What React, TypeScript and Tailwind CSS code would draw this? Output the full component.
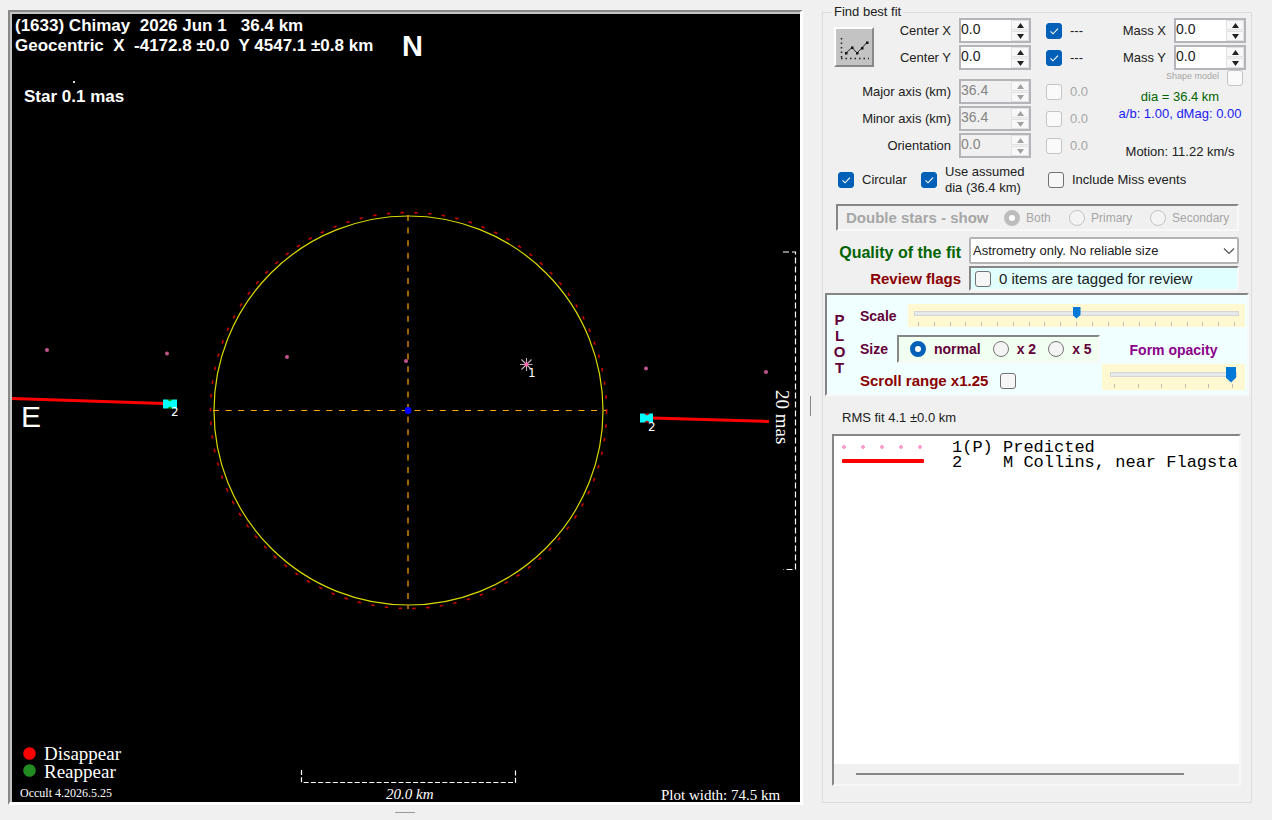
import { useState } from "react";

const sunken = "border-t-2 border-l-2 border-r-2 border-b-2 border-t-[#868686] border-l-[#868686] border-r-[#f8f8f8] border-b-[#f8f8f8]";

interface CheckProps {
  id: string;
  label?: string;
  defaultChecked?: boolean;
  disabled?: boolean;
}

function Check({ id, label, defaultChecked, disabled }: CheckProps) {
  return (
    <span className="grid size-4 shrink-0">
      <input
        id={id}
        type="checkbox"
        aria-label={label}
        defaultChecked={defaultChecked}
        disabled={disabled}
        className="peer [grid-area:1/1] size-4 appearance-none rounded-[3px] border border-[#727272] bg-[#f6f6f6] checked:border-[#0060b8] checked:bg-[#0060b8] disabled:border-[#c4c4c4] disabled:bg-[#fafafa]"
      />
      <svg viewBox="0 0 16 16" className="pointer-events-none invisible size-4 [grid-area:1/1] peer-checked:visible">
        <path d="M4.5 8.3 7 10.8l5-5.1" fill="none" stroke="#fff" strokeWidth="1.1" />
      </svg>
    </span>
  );
}

interface SpinnerProps {
  id: string;
  value: string;
  disabled?: boolean;
}

function Spinner({ id, value, disabled }: SpinnerProps) {
  const color = disabled ? "#a0a0a0" : "#202020";
  return (
    <span className={"flex h-[25px] w-[72px] shrink-0 border-2 border-[#b4b4ba] " + (disabled ? "bg-[#f0f0f0]" : "bg-white")}>
      <input
        id={id}
        defaultValue={value}
        disabled={disabled}
        className="w-12 min-w-0 flex-1 bg-transparent pb-1 text-[14px] leading-4 text-[#202020] outline-none disabled:text-[#848484]"
      />
      <span className="flex w-[18px] flex-col gap-px bg-[#f0f0f0]">
        <button type="button" aria-label="Up" disabled={disabled} className="flex flex-1 items-center justify-center border border-[#e2e2e2] bg-[#f8f8f8]">
          <svg width="7" height="5" viewBox="0 0 7 5"><path d="M0 5 3.5 0 7 5z" fill={color} /></svg>
        </button>
        <button type="button" aria-label="Down" disabled={disabled} className="flex flex-1 items-center justify-center border border-[#e2e2e2] bg-[#f8f8f8]">
          <svg width="7" height="5" viewBox="0 0 7 5"><path d="M0 0 3.5 5 7 0z" fill={color} /></svg>
        </button>
      </span>
    </span>
  );
}

interface FitRowProps {
  id: string;
  label: string;
  value: string;
  error: string;
  locked?: boolean;
}

function FitRow({ id, label, value, error, locked }: FitRowProps) {
  return (
    <div className="flex items-center">
      <label htmlFor={id} className="flex-1 pr-2 text-right whitespace-nowrap">{label}</label>
      <Spinner id={id} value={value} disabled={locked} />
      <span className="ml-[15px] flex items-center gap-2">
        <Check id={id + "-fit"} label={"Fit " + label} defaultChecked={!locked} disabled={locked} />
        <span className={"w-7 " + (locked ? "text-[#a6a6a6]" : "")}>{error}</span>
      </span>
    </div>
  );
}

const radioClass =
  "size-4 shrink-0 appearance-none rounded-full border border-[#767676] bg-[#f4f4f4] checked:border-[5px] checked:border-[#0060b8] checked:bg-white disabled:border-[#c4c4c4] disabled:checked:border-[#bdbdbd]";

const rangeClass =
  "block w-full appearance-none bg-transparent outline-none [&::-webkit-slider-runnable-track]:h-[5px] [&::-webkit-slider-runnable-track]:border [&::-webkit-slider-runnable-track]:border-[#d6d6d6] [&::-webkit-slider-runnable-track]:bg-[#e7eaea] [&::-webkit-slider-thumb]:appearance-none [&::-webkit-slider-thumb]:bg-[#0078d7] [&::-webkit-slider-thumb]:[clip-path:polygon(0_0,100%_0,100%_70%,50%_100%,0_70%)]";

function Ticks({ count }: { count: number }) {
  return (
    <div className="flex justify-between px-1">
      {Array.from({ length: count }, (_, i) => (
        <span key={i} className="h-1 w-px bg-[#bdbdb0]" />
      ))}
    </div>
  );
}

const predicted = [[47, 350], [167, 353.5], [287, 357], [406, 361], [646, 368.5], [766, 372]];

function Plot() {
  return (
    <svg viewBox="12 14 788 788" className="block h-auto w-full bg-black">
      <g fill="#fff" fontFamily="'Liberation Sans', sans-serif" fontWeight="700" fontSize="17">
        <text x="15" y="31" className="whitespace-pre">{"(1633) Chimay  2026 Jun 1   36.4 km"}</text>
        <text x="15" y="51" className="whitespace-pre">{"Geocentric  X  -4172.8 ±0.0  Y 4547.1 ±0.8 km"}</text>
        <text x="24" y="102">Star 0.1 mas</text>
        <text x="402" y="56" fontSize="29">N</text>
        <text x="21" y="427" fontSize="30" fontWeight="400">E</text>
      </g>
      <rect x="73" y="81" width="2" height="2" fill="#ddd" />

      {/* fitted circle and its axes */}
      <circle cx="408.5" cy="410.5" r="198" fill="none" stroke="#c80000" strokeWidth="1.6" strokeDasharray="3.5 10.3" />
      <circle cx="408.5" cy="410.5" r="194.5" fill="none" stroke="#d8d800" strokeWidth="1.2" />
      <path d="M408 215V609M213 410.5H606" fill="none" stroke="#ffa500" strokeWidth="1.2" strokeDasharray="6 6.6" />
      <circle cx="408" cy="410.5" r="3.4" fill="#00f" />

      {predicted.map(([x, y]) => (
        <circle key={x} cx={x} cy={y} r="2" fill="#c0548c" />
      ))}
      <path d="M520 364.5H532.500M526.500 358V371M521.500 359.500 531.500 369.500M531.500 359.500 521.500 369.500" stroke="#c8b0c4" strokeWidth="1.1" />
      <circle cx="526.5" cy="364.5" r="2" fill="#ff69b4" />

      {/* observed chord */}
      <path d="M10 398.500 164 403.500M652 418 769 421.500" stroke="#f00" strokeWidth="3" />
      <path d="M163 399.500H167.500L170 401 172.500 399.500H177V408.500H172.500L170 407 167.500 408.500H163z" fill="#0ff" />
      <path d="M167 399.500H173L170 401.500zM167 408.500H173L170 406.500z" fill="#00a000" />
      <path d="M640 413.500H644.500L647 415 649.500 413.500H653V422.500H649.500L647 421 644.500 422.500H640z" fill="#0ff" />
      <path d="M644 413.500H650L647 415.500zM644 422.500H650L647 420.500z" fill="#c00" />
      <g fill="#fff" fontFamily="'DejaVu Sans', sans-serif" fontSize="12">
        <text x="171" y="416">2</text>
        <text x="648" y="431">2</text>
        <text x="528" y="377">1</text>
      </g>

      {/* scale brackets */}
      <path d="M301.500 770V782.500H515.500V770" fill="none" stroke="#fff" strokeWidth="1.2" strokeDasharray="5 2.3" />
      <path d="M783 252H795.500V569.500H783" fill="none" stroke="#fff" strokeWidth="1.2" strokeDasharray="6 3" />

      <circle cx="29.5" cy="753.5" r="6.300" fill="#f00" />
      <circle cx="29.5" cy="770.5" r="6.300" fill="#228b22" />
      <g fill="#fff" fontFamily="'Liberation Serif', serif">
        <text x="44" y="760" fontSize="19">Disappear</text>
        <text x="44" y="778" fontSize="19">Reappear</text>
        <text x="20" y="797" fontSize="12">Occult 4.2026.5.25</text>
        <text x="386" y="799" fontSize="15" fontStyle="italic">20.0 km</text>
        <text x="661" y="800" fontSize="15">Plot width: 74.5 km</text>
        <text transform="translate(776 390) rotate(90)" fontSize="19">20 mas</text>
      </g>
    </svg>
  );
}

export default function App() {
  const [scale, setScale] = useState(10);
  const [opacity, setOpacity] = useState(5);
  const [size, setSize] = useState("normal");

  return (
    <div className="min-h-screen bg-[#f0f0f0] font-['Liberation_Sans',sans-serif] text-[13px] leading-4 text-[#202020]">
      <div className="flex pt-[6px] pr-5 pl-2">
        <main className="mt-1 min-w-0 flex-1 border-t-2 border-r-[3px] border-b-[3px] border-l-2 border-t-[#888] border-r-white border-b-white border-l-[#888]">
          <div className="border-t-2 border-l-2 border-[#c4c4c4]">
            <Plot />
          </div>
        </main>

        <div className="flex w-[19px] shrink-0 items-center pl-[7px]">
          <span className="h-5 w-px bg-[#868686]" />
        </div>

        <fieldset className="mb-[2px] flex w-[430px] shrink-0 flex-col border border-[#dcdcdc]">
          <legend className="ml-[9px] px-[2px] leading-3">Find best fit</legend>

          <div className="flex pr-[5px] pl-[11px]">
            <div className="flex w-[264px] flex-col gap-[9px]">
              <div className="flex">
                <button type="button" aria-label="Plot" className="mt-[9px] size-10 shrink-0 border-2 border-t-white border-r-[#888] border-b-[#888] border-l-white bg-[#c3c3c3]">
                  <svg viewBox="0 0 36 36" className="size-9">
                    <path d="M5.500 9V30M5 29.500H33" stroke="#222" strokeWidth="1.500" strokeDasharray="1.500 3" />
                    <path d="M10 24 16 18.500 21 24 31 13.500" fill="none" stroke="#222" strokeWidth="1" />
                    <path d="M9 23h2.500v2.500H9zM15 17.500h2.500V20H15zM20 23h2.500v2.500H20zM25 18h2.500v2.500H25zM30 12.500h2.500V15H30z" fill="#111" />
                  </svg>
                </button>
                <div className="flex flex-1 flex-col gap-[2px]">
                  <FitRow id="center-x" label="Center X" value="0.0" error="---" />
                  <FitRow id="center-y" label="Center Y" value="0.0" error="---" />
                </div>
              </div>
              <div className="flex flex-col gap-[2px]">
                <FitRow id="major" label="Major axis (km)" value="36.4" error="0.0" locked />
                <FitRow id="minor" label="Minor axis (km)" value="36.4" error="0.0" locked />
                <FitRow id="orientation" label="Orientation" value="0.0" error="0.0" locked />
              </div>
            </div>

            <div className="flex flex-1 flex-col">
              <div className="flex flex-col gap-[2px]">
                <div className="flex items-center">
                  <label htmlFor="mass-x" className="flex-1 pr-2 text-right">Mass X</label>
                  <Spinner id="mass-x" value="0.0" />
                </div>
                <div className="flex items-center">
                  <label htmlFor="mass-y" className="flex-1 pr-2 text-right">Mass Y</label>
                  <Spinner id="mass-y" value="0.0" />
                </div>
              </div>
              <div className="flex justify-end gap-2 pr-[3px]">
                <label htmlFor="shape" className="text-[9px] leading-3 text-[#a6a6a6]">Shape model</label>
                <Check id="shape" disabled />
              </div>
              <div className="-mb-[2px] flex flex-1 flex-col pt-[3px] pl-4 text-center whitespace-nowrap">
                <p className="text-[#006400]">dia = 36.4 km</p>
                <p className="mt-px text-[#1c1cf0]">a/b: 1.00, dMag: 0.00</p>
                <p className="mt-auto">Motion: 11.22 km/s</p>
              </div>
            </div>
          </div>

          <div className="mt-[6px] grid grid-cols-[83px_127px_1fr] items-center pl-[15px]">
            <div className="flex items-center gap-2">
              <Check id="circular" defaultChecked />
              <label htmlFor="circular">Circular</label>
            </div>
            <div className="flex items-center gap-2">
              <Check id="assumed" defaultChecked />
              <label htmlFor="assumed">Use assumed<br />dia (36.4 km)</label>
            </div>
            <div className="flex items-center gap-2">
              <Check id="miss" />
              <label htmlFor="miss">Include Miss events</label>
            </div>
          </div>

          <div className={"mt-2 mr-3 ml-[13px] flex h-[27px] items-center pl-2 text-[12px] text-[#a6a6a6] " + sunken}>
            <span className="w-[158px] text-[15px] font-bold">Double stars - show</span>
            <label className="flex w-[65px] items-center gap-[6px]">
              <input type="radio" name="double" defaultChecked disabled className={radioClass} />Both
            </label>
            <label className="flex w-[81px] items-center gap-[6px]">
              <input type="radio" name="double" disabled className={radioClass} />Primary
            </label>
            <label className="flex items-center gap-[6px]">
              <input type="radio" name="double" disabled className={radioClass} />Secondary
            </label>
          </div>

          <div className="mt-[6px] mr-3 flex items-center justify-end gap-2">
            <label htmlFor="quality" className="pt-1 text-[16px] font-bold text-[#006400]">Quality of the fit</label>
            <div className="grid w-[270px]">
              <select id="quality" className="h-[27px] appearance-none rounded-[2px] border-2 border-[#b4b4b4] bg-white px-[2px] [grid-area:1/1]">
                <option>Astrometry only. No reliable size</option>
              </select>
              <svg viewBox="0 0 12 12" className="pointer-events-none mr-1 size-3 self-center justify-self-end [grid-area:1/1]">
                <path d="M1 3.500 6 8.500 11 3.500" fill="none" stroke="#555" strokeWidth="1.200" />
              </svg>
            </div>
          </div>

          <div className="mt-[2px] mr-3 flex items-center justify-end gap-2">
            <span className="text-[15px] font-bold text-[#8b0000]">Review flags</span>
            <div className={"flex h-[25px] w-[270px] items-center gap-2 bg-[#e0ffff] pl-1 text-[15px] " + sunken}>
              <Check id="review" />
              <label htmlFor="review">0 items are tagged for review</label>
            </div>
          </div>

          <div className={"mt-[2px] mr-[2px] ml-[2px] flex bg-[#f0ffff] pt-[9px] pb-1 text-[14px] font-bold text-[#640038] " + sunken}>
            <div className="flex w-[33px] flex-col items-center pt-2 pr-2 text-[15px]">
              <span>P</span>
              <span>L</span>
              <span>O</span>
              <span>T</span>
            </div>
            <div className="flex-1">
              <div className="flex items-center pr-[2px]">
                <label htmlFor="scale" className="w-12">Scale</label>
                <div className="flex-1 bg-[#fff8d0] px-[6px] pb-px">
                  <input
                    id="scale"
                    type="range"
                    min="0"
                    max="20"
                    value={scale}
                    onChange={(e) => setScale(Number(e.target.value))}
                    className={rangeClass + " h-[18px] [&::-webkit-slider-thumb]:-mt-[5px] [&::-webkit-slider-thumb]:h-3 [&::-webkit-slider-thumb]:w-2"}
                  />
                  <Ticks count={21} />
                </div>
              </div>
              <div className="mt-2 flex justify-between pr-[2px]">
                <div>
                  <div className="flex items-center">
                    <span className="w-[37px]">Size</span>
                    <div className={"flex h-7 w-[203px] items-center gap-3 bg-[#f0fff0] pl-[11px] " + sunken}>
                      {["normal", "x 2", "x 5"].map((s) => (
                        <label key={s} className="flex items-center gap-2">
                          <input type="radio" name="size" checked={size === s} onChange={() => setSize(s)} className={radioClass} />
                          {s}
                        </label>
                      ))}
                    </div>
                  </div>
                  <div className="mt-[10px] flex items-center gap-3 text-[15px] text-[#8b0000]">
                    <label htmlFor="scroll">Scroll range x1.25</label>
                    <Check id="scroll" />
                  </div>
                </div>
                <div className="w-[143px]">
                  <label htmlFor="opacity" className="block pt-[7px] pb-[6px] text-center text-[#8b008b]">Form opacity</label>
                  <div className="bg-[#fff8d0] px-2 pb-[2px]">
                    <input
                      id="opacity"
                      type="range"
                      min="0"
                      max="5"
                      value={opacity}
                      onChange={(e) => setOpacity(Number(e.target.value))}
                      className={rangeClass + " h-5 [&::-webkit-slider-thumb]:-mt-[6px] [&::-webkit-slider-thumb]:h-4 [&::-webkit-slider-thumb]:w-[10px]"}
                    />
                    <Ticks count={6} />
                  </div>
                </div>
              </div>
            </div>
          </div>

          <p className="mt-[14px] ml-[19px]">RMS fit 4.1 ±0.0 km</p>

          <div className={"mt-2 mr-[10px] mb-4 ml-[9px] flex flex-1 flex-col bg-white " + sunken}>
            <ul className="flex-1 overflow-hidden pt-1 pl-2 font-['Liberation_Mono',monospace] text-[17px] leading-[15px] whitespace-pre text-black">
              <li className="flex h-[15px] gap-7">
                <svg viewBox="0 0 82 15" className="h-[15px] w-[82px] shrink-0">
                  {[2, 21, 40, 59, 78].map((x) => (
                    <circle key={x} cx={x} cy="7" r="1.4" fill="#ffc0dc" stroke="#ff69b4" strokeWidth="0.8" />
                  ))}
                </svg>
                <span>{"1(P) Predicted"}</span>
              </li>
              <li className="flex h-[15px] gap-7">
                <svg viewBox="0 0 82 15" className="h-[15px] w-[82px] shrink-0">
                  <path d="M1.500 6H80.500" stroke="#f00" strokeWidth="4" strokeLinecap="round" />
                </svg>
                <span>{"2    M Collins, near Flagsta"}</span>
              </li>
            </ul>
            <div className="flex h-5 items-center bg-[#f0f0f0] pr-[55px] pl-[22px]">
              <span className="h-[2px] flex-1 bg-[#868686]" />
            </div>
          </div>
        </fieldset>
      </div>
      <div className="flex pt-[7px] pr-[470px] pl-2">
        <span className="mx-auto h-px w-5 bg-[#999]" />
      </div>
    </div>
  );
}
